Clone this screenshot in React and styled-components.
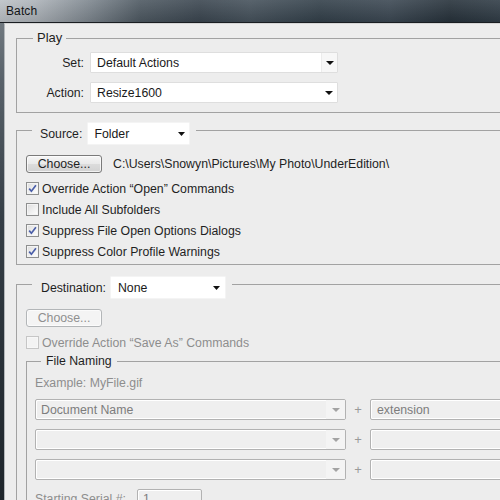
import React from 'react';
import styled, { createGlobalStyle } from 'styled-components';

const GlobalStyle = createGlobalStyle`
  *, *::before, *::after { box-sizing: border-box; }
  html, body { margin: 0; padding: 0; }
  body {
    background: #26313a;
    font-family: "Liberation Sans", Arial, sans-serif;
    font-size: 12.3px;
    color: #1f1f1f;
  }
`;

const Frame = styled.div`
  width: 500px;
  height: 500px;
  overflow: hidden;
  display: flex;
  flex-direction: column;
  background: linear-gradient(to bottom, #7a8288 0px, #59626a 80px, #353e46 220px, #1e252b 500px);
`;

const TitleBar = styled.div`
  height: 23px;
  flex: none;
  display: flex;
  align-items: center;
  padding-left: 6px;
  border-bottom: 1px solid #1a1e22;
  background:
    linear-gradient(to bottom, rgba(255,255,255,0.10), rgba(0,0,0,0.10)),
    linear-gradient(to right, #bcc1c6 0px, #adb3b9 35px, #7d868e 90px, #4e5962 140px, #3b4650 200px, #46525c 250px, #33404a 320px, #3c4853 390px, #27323b 450px, #313d47 500px);
  font-size: 12px;
  color: #121416;
  letter-spacing: 0.1px;
`;

const Body = styled.div`
  flex: 1;
  min-height: 0;
  display: flex;
  padding-left: 4px;
`;

const Window = styled.div`
  flex: 1;
  min-width: 0;
  background: #ededed;
  border-left: 1px solid #b3b7ba;
  border-top: 1px solid #d6d6d6;
  padding: 5px 0 0 11px;
  overflow: hidden;
`;

const Group = styled.fieldset`
  margin: ${p => p.$mt || 0}px 0 0 ${p => p.$ml || 0}px;
  padding: 0 0 ${p => p.$pb || 0}px 0;
  border: 1px solid #a2a2a2;
  border-right: none;
  width: 700px;
  min-width: 0;
`;

const Legend = styled.legend`
  margin-left: ${p => p.$ml}px;
  padding: ${p => p.$pad};
  display: flex;
  align-items: center;
  gap: ${p => p.$gap || 5}px;
  line-height: 16px;
  font-size: ${p => p.$fs || 12.3}px;
  color: #1f1f1f;
`;

const Rows = styled.div`
  display: flex;
  flex-direction: column;
  gap: ${p => p.$gap || 0}px;
  padding-top: ${p => p.$pt || 0}px;
  padding-left: ${p => p.$pl || 0}px;
`;

const FormRow = styled.div`
  display: flex;
  align-items: center;
  height: ${p => p.$h || 21}px;
`;

const RowLabel = styled.span`
  width: 67px;
  text-align: right;
  margin-right: 6px;
  color: #1f1f1f;
`;

const SelectBox = styled.div`
  width: ${p => p.$w}px;
  height: ${p => p.$h}px;
  flex: none;
  display: flex;
  align-items: center;
  background: ${p => (p.$disabled ? '#efefef' : '#ffffff')};
  border: 1px solid ${p => (p.$disabled ? '#b2b2b2' : p.$plain ? '#f4f4f4' : '#dedede')};
  border-radius: ${p => (p.$disabled ? 2 : 1)}px;
  box-shadow: ${p => (p.$disabled ? 'inset 1px 1px 0 #ffffff, inset -1px -1px 0 #ffffff' : 'none')};
  color: ${p => (p.$disabled ? '#7d7d7d' : '#1a1a1a')};
  overflow: hidden;
`;

const SelectValue = styled.span`
  flex: 1;
  padding-left: ${p => p.$pl || 6}px;
  white-space: nowrap;
  overflow: hidden;
`;

const ArrowZone = styled.span`
  width: ${p => p.$w}px;
  height: 100%;
  flex: none;
  display: flex;
  align-items: center;
  justify-content: center;
  background: ${p => p.$bg || 'transparent'};
  border-left: ${p => (p.$line ? '1px solid #ececec' : 'none')};
`;

const Arrow = ({ color = '#111', w = 8, h = 4 }) => (
  <svg width={w} height={h} viewBox={`0 0 ${w} ${h}`}>
    <polygon points={`0,0 ${w},0 ${w / 2},${h}`} fill={color} />
  </svg>
);

const Button = styled.div`
  width: 76px;
  height: 18px;
  flex: none;
  display: flex;
  align-items: center;
  justify-content: center;
  border-radius: 3px;
  border: 1px solid ${p => (p.$disabled ? '#b3b6b8' : '#7a7a7a')};
  background: ${p => (p.$disabled
    ? '#f4f4f4'
    : 'linear-gradient(to bottom, #f6f6f6 0%, #e9e9e9 50%, #dcdcdc 51%, #d2d2d2 100%)')};
  box-shadow: inset 0 0 0 1px ${p => (p.$disabled ? '#fbfbfb' : 'rgba(255,255,255,0.7)')};
  color: ${p => (p.$disabled ? '#8f8f8f' : '#1f1f1f')};
  line-height: 14px;
`;

const ButtonRow = styled.div`
  display: flex;
  align-items: center;
  gap: 11px;
  margin-top: 9px;
  padding-left: 9px;
`;

const PathText = styled.span`
  color: #1f1f1f;
  white-space: nowrap;
`;

const CheckList = styled.div`
  display: flex;
  flex-direction: column;
  margin-top: 5px;
  padding-left: 9px;
`;

const CheckRow = styled.div`
  display: flex;
  align-items: center;
  gap: 3px;
  height: 21px;
  color: ${p => (p.$disabled ? '#8d8d8d' : '#1f1f1f')};
  white-space: nowrap;
`;

const Box = styled.span`
  width: 13px;
  height: 13px;
  flex: none;
  display: flex;
  align-items: center;
  justify-content: center;
  border: 1px solid ${p => (p.$disabled ? '#c6c6c6' : '#8e8f8f')};
  background: ${p => (p.$disabled
    ? '#f3f3f3'
    : 'linear-gradient(135deg, #dcdcdc 0%, #f2f2f2 60%, #ffffff 100%)')};
  box-shadow: inset 0 0 0 1px ${p => (p.$disabled ? '#f7f7f7' : '#f4f4f4')};
`;

const Check = () => (
  <svg width="9" height="9" viewBox="0 0 9 9">
    <path d="M1.2 4.6 L3.4 7.2 L7.9 1.2" stroke="#4a5ea8" strokeWidth="1.7" fill="none" strokeLinejoin="miter" />
  </svg>
);

const CheckItem = ({ checked, disabled, children }) => (
  <CheckRow $disabled={disabled}>
    <Box $disabled={disabled}>{checked && <Check />}</Box>
    <span>{children}</span>
  </CheckRow>
);

const Hint = styled.div`
  margin-top: 7px;
  padding-left: 8px;
  line-height: 14px;
  color: #8e8e8e;
`;

const NamingGrid = styled.div`
  display: flex;
  flex-direction: column;
  gap: 9px;
  margin-top: 9px;
  padding-left: 8px;
`;

const NamingRow = styled.div`
  display: flex;
  align-items: center;
  height: 21px;
`;

const Plus = styled.span`
  width: 24px;
  flex: none;
  text-align: center;
  color: #9a9a9a;
  font-size: 13px;
`;

const SerialRow = styled.div`
  display: flex;
  align-items: center;
  gap: 11px;
  margin-top: 9px;
  padding-left: 8px;
  color: #8e8e8e;
`;

const TextInput = styled.div`
  width: 65px;
  height: 20px;
  flex: none;
  display: flex;
  align-items: center;
  padding-left: 5px;
  border: 1px solid #b2b2b2;
  border-radius: 2px;
  background: #efefef;
  box-shadow: inset 1px 1px 0 #fff;
  color: #7d7d7d;
`;

const DisabledSelect = ({ value, w }) => (
  <SelectBox $w={w} $h={21} $disabled>
    <SelectValue $pl={5}>{value}</SelectValue>
    <ArrowZone $w={19} $bg="#f4f4f4">
      <Arrow color="#a3a3a3" w={8} h={4} />
    </ArrowZone>
  </SelectBox>
);

export default function App() {
  return (
    <>
      <GlobalStyle />
      <Frame>
        <TitleBar>Batch</TitleBar>
        <Body>
          <Window>
            <Group $mt={1} $pb={9}>
              <Legend $ml={16} $pad="0 4px" $fs={13}>Play</Legend>
              <Rows $pt={6} $gap={9}>
                <FormRow>
                  <RowLabel>Set:</RowLabel>
                  <SelectBox $w={248} $h={21}>
                    <SelectValue>Default Actions</SelectValue>
                    <ArrowZone $w={16} $bg="#f7f7f7" $line>
                      <Arrow />
                    </ArrowZone>
                  </SelectBox>
                </FormRow>
                <FormRow>
                  <RowLabel>Action:</RowLabel>
                  <SelectBox $w={248} $h={21}>
                    <SelectValue>Resize1600</SelectValue>
                    <ArrowZone $w={16}>
                      <Arrow />
                    </ArrowZone>
                  </SelectBox>
                </FormRow>
              </Rows>
            </Group>

            <Group $mt={1} $pb={2}>
              <Legend $ml={15} $pad="8px 6px 1px 8px">
                <span>Source:</span>
                <SelectBox $w={103} $h={23} $plain>
                  <SelectValue>Folder</SelectValue>
                  <ArrowZone $w={16}>
                    <Arrow w={7} h={4} />
                  </ArrowZone>
                </SelectBox>
              </Legend>
              <ButtonRow>
                <Button>Choose...</Button>
                <PathText>C:\Users\Snowyn\Pictures\My Photo\UnderEdition\</PathText>
              </ButtonRow>
              <CheckList>
                <CheckItem checked>Override Action “Open” Commands</CheckItem>
                <CheckItem>Include All Subfolders</CheckItem>
                <CheckItem checked>Suppress File Open Options Dialogs</CheckItem>
                <CheckItem checked>Suppress Color Profile Warnings</CheckItem>
              </CheckList>
            </Group>

            <Group $mt={3} $pb={40}>
              <Legend $ml={15} $pad="8px 6px 1px 9px" $gap={4}>
                <span>Destination:</span>
                <SelectBox $w={116} $h={23} $plain>
                  <SelectValue $pl={7}>None</SelectValue>
                  <ArrowZone $w={16}>
                    <Arrow w={7} h={4} />
                  </ArrowZone>
                </SelectBox>
              </Legend>
              <ButtonRow>
                <Button $disabled>Choose...</Button>
              </ButtonRow>
              <CheckList>
                <CheckItem disabled>Override Action “Save As” Commands</CheckItem>
              </CheckList>
              <Group $ml={9} $pb={20}>
                <Legend $ml={14} $pad="0 5px">File Naming</Legend>
                <Hint>Example: MyFile.gif</Hint>
                <NamingGrid>
                  <NamingRow>
                    <DisabledSelect w={311} value="Document Name" />
                    <Plus>+</Plus>
                    <SelectBox $w={300} $h={21} $disabled>
                      <SelectValue>extension</SelectValue>
                    </SelectBox>
                  </NamingRow>
                  <NamingRow>
                    <DisabledSelect w={311} value="" />
                    <Plus>+</Plus>
                    <SelectBox $w={300} $h={21} $disabled />
                  </NamingRow>
                  <NamingRow>
                    <DisabledSelect w={311} value="" />
                    <Plus>+</Plus>
                    <SelectBox $w={300} $h={21} $disabled />
                  </NamingRow>
                </NamingGrid>
                <SerialRow>
                  <span>Starting Serial #:</span>
                  <TextInput>1</TextInput>
                </SerialRow>
              </Group>
            </Group>
          </Window>
        </Body>
      </Frame>
    </>
  );
}
